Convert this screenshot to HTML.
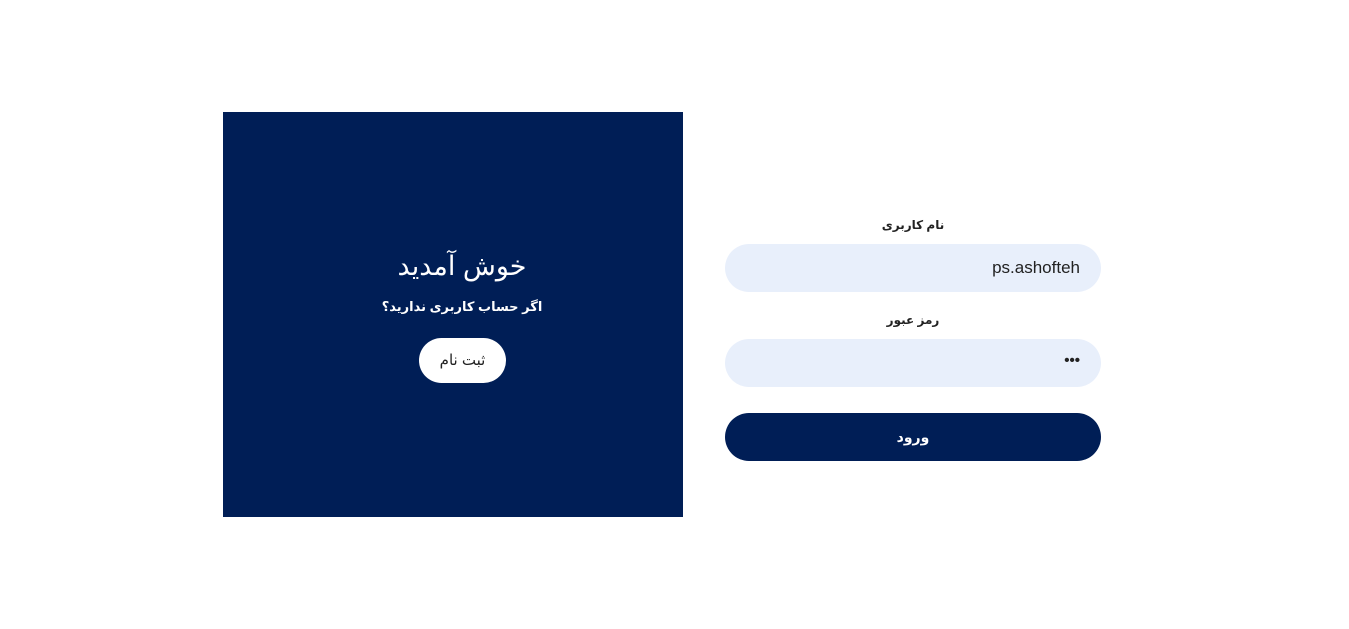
<!DOCTYPE html>
<html><head><meta charset="utf-8"><style>
*{margin:0;padding:0;box-sizing:border-box}
body{width:1349px;height:629px;background:#fff;position:relative;font-family:"Liberation Sans","DejaVu Sans",sans-serif;overflow:hidden}
.panel{position:absolute;left:223px;top:112px;width:460px;height:405px;background:#001e56;color:#fff;text-align:center}
.t1{position:absolute;left:18px;right:0;top:139px;font-size:27px;direction:rtl}
.t2{position:absolute;left:18px;right:0;top:187px;font-size:13px;font-weight:bold;direction:rtl}
.btn1{position:absolute;left:196px;top:226px;width:87px;height:45px;border-radius:23px;background:#fff;color:#222;font-size:15px;line-height:45px;direction:rtl}
.lbl{position:absolute;left:725px;width:376px;text-align:center;font-size:12px;font-weight:bold;color:#222;direction:rtl}
.inp{position:absolute;left:725px;width:376px;height:48px;border-radius:24px;background:#e8effb;color:#222;font-size:17px;line-height:48px;text-align:right;padding-right:21px}
.go{position:absolute;left:725px;top:413px;width:376px;height:48px;border-radius:24px;background:#001e56;color:#fff;font-size:14px;font-weight:bold;line-height:48px;text-align:center;direction:rtl}
</style></head><body>
<div class="panel">
<div class="t1">خوش آمدید</div>
<div class="t2">اگر حساب کاربری ندارید؟</div>
<div class="btn1">ثبت نام</div>
</div>
<div class="lbl" style="top:218px">نام کاربری</div>
<div class="inp" style="top:244px">ps.ashofteh</div>
<div class="lbl" style="top:313px">رمز عبور</div>
<div class="inp" style="top:339px;font-size:15px;font-weight:bold;line-height:44px">•••</div>
<div class="go">ورود</div>
</body></html>
